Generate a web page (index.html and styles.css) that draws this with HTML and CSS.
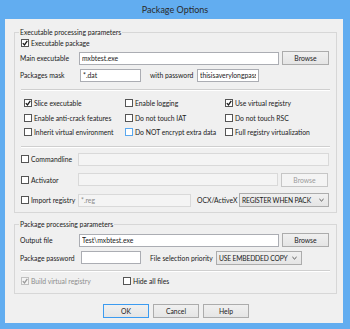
FILE: index.html
```html
<!DOCTYPE html>
<html lang="en">
<head>
    <meta charset="UTF-8">
    <title>Package Options</title>
    <link rel="stylesheet" href="styles.css">
</head>
<body>

<div class="window">
    <div class="titlebar">Package Options</div>

    <div class="client">
        <!-- Executable group -->
        <fieldset class="group group-exe">
            <legend>Executable processing parameters</legend>

            <label class="check row-first">
                <span class="box on"><svg viewBox="0 0 6 6"><path d="M0.8 3.1 L2.5 4.9 L5.3 0.9"/></svg></span>Executable package
            </label>

            <div class="row row-field">
                <span class="lbl">Main executable</span>
                <input class="field w-main" type="text" value="mxbtest.exe" readonly>
                <button class="btn">Browse</button>
            </div>

            <div class="row row-field">
                <span class="lbl">Packages mask</span>
                <input class="field w-mask" type="text" value="*.dat" readonly>
                <span class="lbl lbl-with">with password</span>
                <input class="field w-pass" type="text" value="thisisaverylongpassword" readonly>
            </div>

            <div class="sep sep-first"></div>

            <div class="options">
                <label class="check"><span class="box on"><svg viewBox="0 0 6 6"><path d="M0.8 3.1 L2.5 4.9 L5.3 0.9"/></svg></span>Slice executable</label>
                <label class="check"><span class="box"></span>Enable logging</label>
                <label class="check"><span class="box on"><svg viewBox="0 0 6 6"><path d="M0.8 3.1 L2.5 4.9 L5.3 0.9"/></svg></span>Use virtual registry</label>
                <label class="check"><span class="box"></span>Enable anti-crack features</label>
                <label class="check"><span class="box"></span>Do not touch IAT</label>
                <label class="check"><span class="box"></span>Do not touch RSC</label>
                <label class="check"><span class="box"></span>Inherit virtual environment</label>
                <label class="check"><span class="box hover"></span>Do NOT encrypt extra data</label>
                <label class="check"><span class="box"></span>Full registry virtualization</label>
            </div>

            <div class="sep sep-second"></div>

            <div class="row row-opt row-opt-first">
                <label class="check lbl-check"><span class="box"></span>Commandline</label>
                <input class="field w-long" type="text" value="" disabled>
            </div>

            <div class="row row-opt">
                <label class="check lbl-check"><span class="box"></span>Activator</label>
                <input class="field w-main" type="text" value="" disabled>
                <button class="btn" disabled>Browse</button>
            </div>

            <div class="row row-opt">
                <label class="check lbl-check"><span class="box"></span>Import registry</label>
                <input class="field w-reg" type="text" value="*.reg" disabled>
                <span class="lbl lbl-ocx">OCX/ActiveX</span>
                <div class="combo w-ocx">
                    <span>REGISTER WHEN PACK</span>
                    <svg viewBox="0 0 6 4"><path d="M0.5 0.8 L3 3.2 L5.5 0.8"/></svg>
                </div>
            </div>
        </fieldset>

        <!-- Package group -->
        <fieldset class="group group-pack">
            <legend>Package processing parameters</legend>

            <div class="row row-out">
                <span class="lbl">Output file</span>
                <input class="field w-main" type="text" value="Test\mxbtest.exe" readonly>
                <button class="btn">Browse</button>
            </div>

            <div class="row row-pwd">
                <span class="lbl">Package password</span>
                <input class="field w-pkgpass" type="text" value="" readonly>
                <span class="lbl lbl-prio">File selection priority</span>
                <div class="combo w-prio">
                    <span>USE EMBEDDED COPY</span>
                    <svg viewBox="0 0 6 4"><path d="M0.5 0.8 L3 3.2 L5.5 0.8"/></svg>
                </div>
            </div>

            <div class="sep sep-pack"></div>

            <div class="row row-last">
                <label class="check check-build off"><span class="box on"><svg viewBox="0 0 6 6"><path d="M0.8 3.1 L2.5 4.9 L5.3 0.9"/></svg></span>Build virtual registry</label>
                <label class="check"><span class="box"></span>Hide all files</label>
            </div>
        </fieldset>

        <!-- Dialog buttons -->
        <div class="actions">
            <button class="btn btn-default">OK</button>
            <button class="btn">Cancel</button>
            <button class="btn">Help</button>
        </div>
    </div>
</div>

</body>
</html>
```

FILE: styles.css
```css
/* Fenster */
body {
    margin: 0;
    background: #62adf0;
    font-family: Lato, 'Open Sans', sans-serif;
    font-size: 6.8px;
    color: #1a1a1a;
}

.window {
    width: 350px;
    height: 329px;
    display: flex;
    flex-direction: column;
}

.titlebar {
    height: 19px;
    line-height: 20px;
    text-align: center;
    font-size: 9px;
    color: #2a2a2a;
}

.client {
    flex: 1;
    margin: 0 7px 6px 5px;
    padding: 9px 0 0 9px;
    background: #f0f0f0;
    display: flex;
    flex-direction: column;
}

/* Gruppen */
.group {
    width: 323px;
    box-sizing: border-box;
    margin: 0;
    padding: 0 6px 1.5px 5px;
    border: 1px solid #d7d7d7;
    min-width: 0;
}

.group legend {
    padding: 0 1px;
    margin-left: -1px;
    line-height: 9px;
}

.group-pack {
    margin-top: 7px;
    padding-bottom: 5px;
}

.row {
    display: flex;
    align-items: center;
}

.row-first {
    height: 12px;
}

.row-field {
    height: 16px;
    margin-top: 1px;
}

.row-opt {
    height: 20.5px;
}

.row-opt-first {
    margin-top: 1px;
}

.row-out {
    height: 18px;
    margin-top: 2px;
}

.row-pwd {
    height: 17px;
}

.row-last {
    height: 14px;
    margin-top: 2px;
}

.lbl {
    width: 59px;
    flex-shrink: 0;
    white-space: nowrap;
}

.lbl-with {
    width: 47px;
    margin-left: 9px;
}

.lbl-ocx {
    width: 42px;
    margin-left: 6px;
}

.lbl-prio {
    width: 66px;
    margin-left: 9px;
}

/* Eingabefelder */
.field {
    height: 13px;
    box-sizing: border-box;
    margin: 0;
    padding: 0 2px;
    border: 1px solid #abadb3;
    background: #fff;
    font: inherit;
    color: #1a1a1a;
    outline: none;
    flex-shrink: 0;
}

.field:disabled {
    background: #f4f4f4;
    border-color: #d9d9d9;
    color: #8a8a8a;
}

.w-main { width: 200px; }
.w-mask { width: 61px; margin-left: 1px; }
.w-pass { width: 62px; }
.w-long { width: 251px; }
.w-reg { width: 113px; }
.w-pkgpass { width: 60px; margin-left: 2px; }

/* Buttons */
.btn {
    width: 47px;
    height: 14px;
    box-sizing: border-box;
    margin: 0 0 0 3px;
    padding: 0;
    border: 1px solid #acacac;
    background: linear-gradient(#f0f0f0, #e5e5e5);
    font: inherit;
    color: #1a1a1a;
    flex-shrink: 0;
}

.btn:disabled {
    border-color: #c6c6c6;
    background: #f4f4f4;
    color: #9a9a9a;
}

.btn-default {
    border-color: #3c9bf0;
}

.actions {
    display: flex;
    gap: 4px;
    margin-top: 10px;
    padding-left: 89px;
}

.actions .btn {
    width: 46px;
    margin: 0;
}

/* Kombinationsfelder */
.combo {
    height: 14px;
    box-sizing: border-box;
    border: 1px solid #acacac;
    background: linear-gradient(#f0f0f0, #e5e5e5);
    display: flex;
    align-items: center;
    justify-content: space-between;
    padding: 0 4px 0 2px;
    white-space: nowrap;
    flex-shrink: 0;
    font-size: 6.7px;
    letter-spacing: -0.15px;
}

.combo svg {
    width: 5px;
    height: 4px;
    fill: none;
    stroke: #333;
    stroke-width: 1;
}

.w-ocx { width: 90px; }
.w-prio { width: 86px; }

/* Kontrollkaestchen */
.check {
    display: flex;
    align-items: center;
    white-space: nowrap;
}

.box {
    width: 8px;
    height: 8px;
    box-sizing: border-box;
    border: 1px solid #555;
    background: #fff;
    margin: 0 2px 0 1px;
    display: flex;
    align-items: center;
    justify-content: center;
    flex-shrink: 0;
}

.box svg {
    width: 6px;
    height: 6px;
    fill: none;
    stroke: #1a1a1a;
    stroke-width: 1.3;
}

.box.hover {
    border-color: #5aa8ee;
}

.check.off {
    color: #8d8d8d;
}

.check.off .box {
    border-color: #c0c0c0;
    background: #f4f4f4;
}

.check.off .box svg {
    stroke: #9a9a9a;
}

.lbl-check {
    width: 58px;
}

.check-build {
    width: 102px;
}

.options {
    display: grid;
    grid-template-columns: 101px 100px 1fr;
    grid-auto-rows: 14.5px;
    margin-top: 5px;
    padding-left: 3px;
}

/* Trennlinien */
.sep {
    height: 0;
    border-top: 1px solid #cfcfcf;
    border-bottom: 1px solid #fff;
    margin: 0 0 0 1px;
}

.sep-first { margin-top: 6px; }
.sep-second { margin-top: 6.5px; }
.sep-pack { margin-top: 4px; }
```
